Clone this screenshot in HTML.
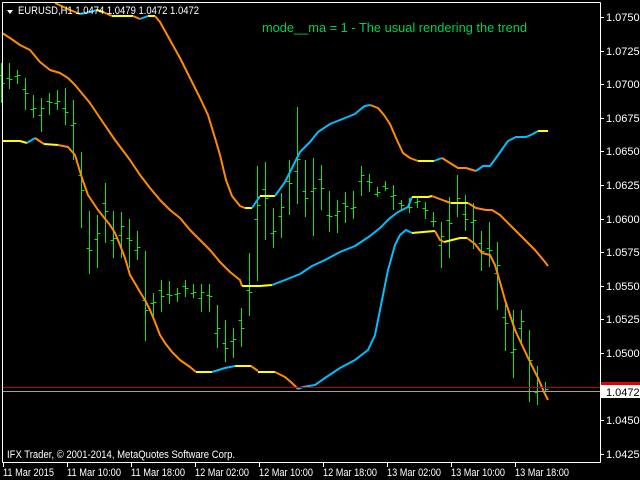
<!DOCTYPE html>
<html><head><meta charset="utf-8"><style>
html,body{margin:0;padding:0;background:#000;width:640px;height:480px;overflow:hidden}
svg{display:block}
text{font-family:"Liberation Sans",sans-serif}
</style></head><body>
<svg id="s" width="640" height="480" xmlns="http://www.w3.org/2000/svg">
<rect width="640" height="480" fill="#000"/>
<g id="bars" stroke="#00ee00" stroke-width="1" shape-rendering="crispEdges"></g>
<g fill="none" stroke-width="2" stroke-linejoin="round">
<polyline stroke="#ff8c00" points="55,3 70,10 80,14"/>
<polyline stroke="#00bfff" points="80,14 90,12 97,10"/>
<polyline stroke="#ffff00" points="97,10 103,12"/>
<polyline stroke="#ffff00" points="112,16 133,16"/>
<polyline stroke="#ff8c00" points="103,12 112,16"/>
<polyline stroke="#ff8c00" points="133,16 140,19"/>
<polyline stroke="#00bfff" points="140,19 148,16"/>
<polyline stroke="#ffff00" points="148,16 155,16"/>
<polyline stroke="#ff8c00" points="155,16 160,22 170,40 180,58 190,78 200,98 208,115 215,138 220,155 226,180 232,196 240,206 245,208"/>
<polyline stroke="#ffff00" points="245,208 252,208"/>
<polyline stroke="#00bfff" points="252,208 260,196"/>
<polyline stroke="#ffff00" points="260,196 275,196"/>
<polyline stroke="#00bfff" points="275,196 285,182 292,168 300,152 310,142 318,132 330,124 345,118 355,114 362,108 365,106 370,105"/>
<polyline stroke="#ff8c00" points="370,105 378,108 384,115 390,124 396,138 403,153 410,158 418,161"/>
<polyline stroke="#ffff00" points="418,161 434,161"/>
<polyline stroke="#00bfff" points="434,161 442,158"/>
<polyline stroke="#ff8c00" points="442,158 450,163 458,168 466,168 476,171"/>
<polyline stroke="#00bfff" points="476,171 483,166 490,166 496,158 503,148 508,141 516,137 526,137 533,134 538,131"/>
<polyline stroke="#ffff00" points="538,131 548,131"/>
<polyline stroke="#ff8c00" points="2,33 10,38 20,45 30,50 40,62 50,70 60,73 68,78 75,85 90,103 100,118 115,140 130,160 140,175 150,188 160,200 170,210 180,218 190,230 200,240 210,250 220,262 230,272 240,280 242,286"/>
<polyline stroke="#ffff00" points="242,286 260,286 272,285"/>
<polyline stroke="#00bfff" points="272,285 285,280 300,274 312,266 325,260 340,252 355,246 370,236 380,228 390,218 398,212 408,207 412,197"/>
<polyline stroke="#ffff00" points="412,197 428,197 432,196"/>
<polyline stroke="#ff8c00" points="432,196 445,201 451,203"/>
<polyline stroke="#ffff00" points="451,203 468,203"/>
<polyline stroke="#ff8c00" points="468,203 476,208 486,210 492,210 500,215 512,227 525,240 535,250 545,262 548,266"/>
<polyline stroke="#ffff00" points="2,141 20,141 27,143"/>
<polyline stroke="#00bfff" points="27,143 35,138"/>
<polyline stroke="#ff8c00" points="35,138 44,144"/>
<polyline stroke="#ffff00" points="44,144 58,145"/>
<polyline stroke="#ff8c00" points="58,145 68,147 75,155 78,165 82,178 88,195 98,210 110,225 115,233 120,245 125,258 130,275 136,285 140,292 145,300 150,310 155,322 160,335 165,343 172,352 180,360 190,367 196,372"/>
<polyline stroke="#ffff00" points="196,372 212,372"/>
<polyline stroke="#00bfff" points="212,372 225,368 235,366"/>
<polyline stroke="#ffff00" points="235,366 251,366"/>
<polyline stroke="#ff8c00" points="251,366 258,371"/>
<polyline stroke="#ffff00" points="258,372 275,372"/>
<polyline stroke="#ff8c00" points="275,372 285,377 292,383 298,389"/>
<polyline stroke="#00bfff" points="298,389 303,387 315,385 325,378 340,368 355,360 368,350 375,335 380,310 388,270 395,245 400,235 406,230 412,233"/>
<polyline stroke="#ffff00" points="412,233 423,232 435,231"/>
<polyline stroke="#ff8c00" points="435,231 440,240 444,242"/>
<polyline stroke="#ffff00" points="444,242 460,238 467,238"/>
<polyline stroke="#ff8c00" points="467,238 475,244 482,253 490,255 495,265 500,282 505,300 510,315 515,330 522,345 530,362 538,378 544,392 548,400"/>
</g>
<line x1="2" y1="387.5" x2="600" y2="387.5" stroke="#c00000" stroke-width="1"/>
<line x1="2" y1="391.5" x2="600" y2="391.5" stroke="#a0a0a0" stroke-width="1"/>
<g stroke="#fff" stroke-width="1" shape-rendering="crispEdges">
<line x1="2.5" y1="2.5" x2="600.5" y2="2.5"/>
<line x1="2.5" y1="2.5" x2="2.5" y2="462.5"/>
<line x1="600.5" y1="2.5" x2="600.5" y2="462.5"/>
<line x1="2.5" y1="462.5" x2="600.5" y2="462.5"/>
</g>
<g id="axis" fill="#fff" font-size="11"></g>
<rect x="601" y="382" width="40" height="5" fill="#e00000"/>
<rect x="601" y="385" width="40" height="13" fill="#fff"/>
<text x="606" y="396" font-size="11" fill="#000">1.0472</text>
<polygon points="7,10 13,10 10,14" fill="#fff"/>
<text x="18" y="14" font-size="11" fill="#fff" textLength="181" lengthAdjust="spacingAndGlyphs">EURUSD,H1  1.0474 1.0479 1.0472 1.0472</text>
<text x="262" y="32" font-size="13" fill="#00d050" textLength="265" lengthAdjust="spacingAndGlyphs">mode__ma = 1 - The usual rendering the trend</text>
<text x="7" y="458" font-size="11" fill="#fff" textLength="228" lengthAdjust="spacingAndGlyphs">IFX Trader, © 2001-2014, MetaQuotes Software Corp.</text>
</svg>
<script>
var NS="http://www.w3.org/2000/svg";
var bars=[[3,63,103],[11,63,89],[19,70,84],[27,78,110],[35,95,118],[43,98,132],[51,93,115],[59,90,110],[67,88,125],[75,100,160],[83,152,228],[91,211,274],[99,215,268],[107,183,243],[115,211,258],[123,212,258],[131,219,268],[139,231,260],[147,251,341],[155,293,317],[163,280,312],[171,281,304],[179,288,302],[187,280,297],[195,284,298],[203,284,312],[211,284,312],[219,305,348],[227,320,362],[235,328,358],[243,308,347],[251,253,316],[259,166,281],[267,162,240],[275,208,248],[283,193,238],[291,160,215],[299,107,204],[307,160,217],[315,158,236],[323,165,210],[331,191,232],[339,200,233],[347,192,223],[355,191,219],[363,166,196],[371,174,192],[379,187,197],[387,181,191],[395,185,210],[403,200,210],[411,198,213],[419,197,208],[427,202,219],[435,212,227],[443,222,268],[451,197,258],[459,175,217],[467,195,231],[475,203,249],[483,231,271],[491,222,267],[499,242,310],[507,300,351],[515,310,378],[523,310,345],[531,330,402],[539,366,405],[547,382,392]];
var g=document.getElementById("bars");
function ln(a,b,c,d){var l=document.createElementNS(NS,"line");l.setAttribute("x1",a+.5);l.setAttribute("y1",b);l.setAttribute("x2",c+.5);l.setAttribute("y2",d);g.appendChild(l);}
bars.forEach(function(b,i){var x=b[0]-2;ln(x,b[1],x,b[2]);var h=b[2]-b[1];var o=b[1]+h*(0.3+0.4*((i*37)%10)/10);var c=b[1]+h*(0.3+0.4*((i*53+5)%10)/10);ln(x-3,Math.round(o)+.5,x,Math.round(o)+.5);ln(x,Math.round(c)+.5,x+3,Math.round(c)+.5);});
var ax=document.getElementById("axis");
function t(x,y,s,L){var e=document.createElementNS(NS,"text");e.setAttribute("x",x);e.setAttribute("y",y);if(L){e.setAttribute("textLength",L);e.setAttribute("lengthAdjust","spacingAndGlyphs");}e.textContent=s;ax.appendChild(e);}
function r(x,y,w,h){var e=document.createElementNS(NS,"rect");e.setAttribute("x",x);e.setAttribute("y",y);e.setAttribute("width",w);e.setAttribute("height",h);ax.appendChild(e);}
for(var k=0;k<=13;k++){var p=(1.0750-k*0.0025).toFixed(4);var y=Math.round(17+k*33.6);if(k==11)continue;r(601,y,3,1);t(606,y+4,p);}
var lab=["11 Mar 2015","11 Mar 10:00","11 Mar 18:00","12 Mar 02:00","12 Mar 10:00","12 Mar 18:00","13 Mar 02:00","13 Mar 10:00","13 Mar 18:00"];
lab.forEach(function(s,i){var x=3+64*i;r(x,463,1,4);t(x,476,s,i==0?51:54);});
</script>
</body></html>
